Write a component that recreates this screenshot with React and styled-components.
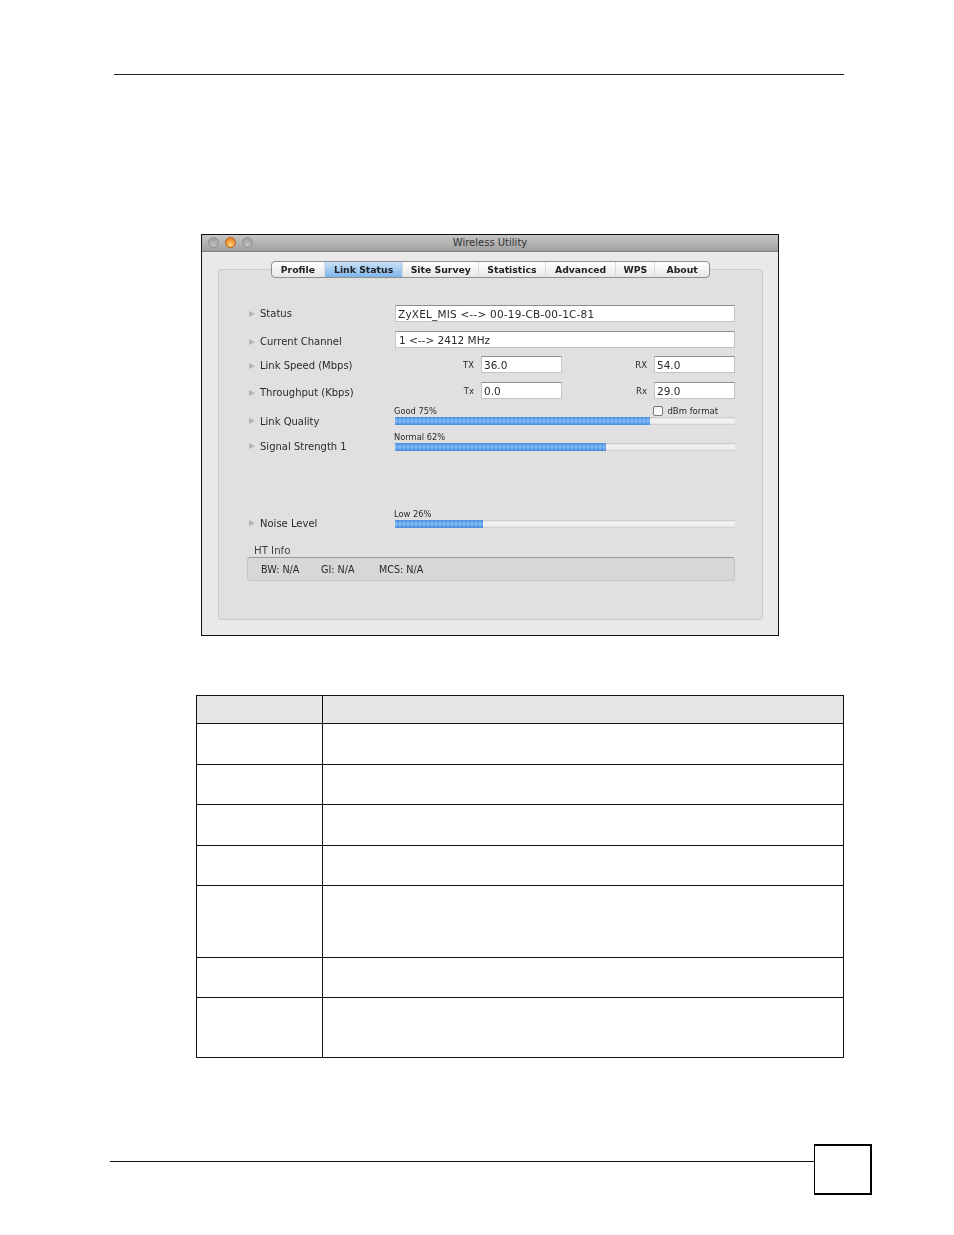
import React from "react";
import styled, { createGlobalStyle } from "styled-components";

const TABS = [
  { label: "Profile", width: 53 },
  { label: "Link Status", width: 79, active: true },
  { label: "Site Survey", width: 76 },
  { label: "Statistics", width: 67 },
  { label: "Advanced", width: 71 },
  { label: "WPS", width: 39 },
  { label: "About", width: 54 },
];

const ROW_HEIGHTS = [41, 40, 41, 40, 72, 40, 60];

const GlobalStyle = createGlobalStyle`
  html, body {
    margin: 0;
    padding: 0;
    background: #fff;
  }
`;

const Page = styled.div`
  width: 954px;
  height: 1235px;
  overflow: hidden;
  padding-top: 74px;
  box-sizing: border-box;
  font-family: "DejaVu Sans", sans-serif;
`;

const HeaderRule = styled.div`
  width: 730px;
  height: 1px;
  margin-left: 114px;
  background: #222;
`;

const AppWindow = styled.div`
  width: 578px;
  height: 402px;
  box-sizing: border-box;
  margin: 159px 0 0 201px;
  border: 1px solid #111;
  background: #e9e9e9;
  color: #2a2a2a;
`;

const Blurred = styled.div`
  filter: blur(0.35px);
`;

const TitleBar = styled.div`
  position: relative;
  height: 16px;
  line-height: 16px;
  display: flex;
  align-items: flex-start;
  justify-content: center;
  background: linear-gradient(#c6c6c6, #a0a0a0);
  border-bottom: 1px solid #808080;
  font-size: 10px;
  color: #333;
`;

const Lights = styled.div`
  position: absolute;
  left: 6px;
  top: 2px;
  display: flex;
  gap: 6px;
`;

const Light = styled.span`
  width: 11px;
  height: 11px;
  border-radius: 50%;
  box-sizing: border-box;
  border: 1px solid ${(p) => (p.$on ? "#b5601a" : "#929292")};
  background: ${(p) =>
    p.$on
      ? "radial-gradient(circle at 50% 75%, #ffd27a, #ee8a2a 70%)"
      : "radial-gradient(circle at 50% 80%, #c4c4c4, #a2a2a2 70%)"};
`;

const Panel = styled.div`
  width: 545px;
  height: 351px;
  box-sizing: border-box;
  margin: 17px 0 0 16px;
  border: 1px solid #cbcbcb;
  border-radius: 3px;
  background: #e0e0e0;
  padding: 0 27px 0 30px;
`;

const TabStrip = styled.div`
  display: flex;
  width: 439px;
  height: 17px;
  box-sizing: border-box;
  margin: -9px 0 0 22px;
  border: 1px solid #8f8f8f;
  border-radius: 4px;
  background: linear-gradient(#ffffff, #f2f2f2 55%, #e6e6e6);
  overflow: hidden;
`;

const Tab = styled.div`
  display: flex;
  align-items: center;
  justify-content: center;
  font-size: 9.3px;
  font-weight: bold;
  color: #222;
  box-sizing: border-box;
  border-right: 1px solid #dcdcdc;
  background: ${(p) =>
    p.$active ? "linear-gradient(#c9e0f6, #7db6ec)" : "transparent"};
  &:last-child {
    border-right: 0;
  }
`;

const Row = styled.div`
  display: grid;
  grid-template-columns: 146px 340px;
  align-items: ${(p) => (p.$meter ? "end" : "center")};
  height: ${(p) => p.$height}px;
  margin-top: ${(p) => p.$gap}px;
`;

const Label = styled.div`
  display: flex;
  align-items: center;
  gap: 5px;
  height: ${(p) => (p.$meter ? "8px" : "auto")};
  margin-top: ${(p) => p.$drop || 0}px;
  margin-bottom: ${(p) => p.$lift || 0}px;
  font-size: 10px;
  color: #2a2a2a;
`;

const Arrow = styled.span`
  width: 0;
  height: 0;
  border-left: 6px solid #b4b4b4;
  border-top: 3.5px solid transparent;
  border-bottom: 3.5px solid transparent;
`;

const Field = styled.div`
  height: 100%;
  box-sizing: border-box;
  padding-left: ${(p) => p.$inset || 2}px;
  display: flex;
  align-items: center;
  background: #fff;
  border: 1px solid #c4c4c4;
  border-top-color: #8e8e8e;
  font-size: 10.5px;
  letter-spacing: ${(p) => p.$spacing || 0}px;
  white-space: pre;
  color: #2a2a2a;
  width: ${(p) => (p.$small ? "81px" : "auto")};
`;

const PairRow = styled.div`
  display: flex;
  align-items: center;
  height: 100%;
`;

const PairLabel = styled.span`
  width: ${(p) => p.$width}px;
  text-align: right;
  padding-right: 7px;
  box-sizing: border-box;
  font-size: 8.5px;
  color: #2a2a2a;
`;

const Meter = styled.div`
  position: relative;
  height: 100%;
  display: flex;
  flex-direction: column;
  justify-content: flex-end;
`;

const Caption = styled.div`
  font-size: 8.3px;
  line-height: 10px;
  color: #2a2a2a;
  margin: 0 0 1px -1px;
`;

const Track = styled.div`
  height: 8px;
  background: linear-gradient(#c0c0c0, #f3f3f3 25%, #ececec 80%, #c4c4c4);
`;

const Fill = styled.div`
  height: 100%;
  background:
    repeating-linear-gradient(90deg, rgba(255, 255, 255, 0.14) 0 2px, transparent 2px 4px),
    linear-gradient(#3f86dc, #74b2f4 50%, #3a80da);
`;

const FormatCheck = styled.label`
  position: absolute;
  right: 17px;
  top: 1px;
  display: flex;
  align-items: center;
  gap: 4px;
  font-size: 8.5px;
  line-height: 10px;
  color: #2a2a2a;
`;

const CheckBox = styled.span`
  width: 10px;
  height: 10px;
  box-sizing: border-box;
  border: 1px solid #777;
  border-radius: 2px;
  background: linear-gradient(#f4f4f4, #ffffff);
`;

const HtTitle = styled.div`
  margin: 16px 0 0 5px;
  font-size: 10.2px;
  line-height: 13px;
  color: #444;
`;

const HtBox = styled.div`
  width: 488px;
  height: 24px;
  box-sizing: border-box;
  margin-left: -2px;
  display: flex;
  align-items: center;
  padding-left: 13px;
  border: 1px solid #c6c6c6;
  border-top-color: #9a9a9a;
  border-radius: 3px;
  background: #d7d7d7;
  font-size: 9.6px;
  color: #2a2a2a;
`;

const HtItem = styled.span`
  width: ${(p) => p.$width}px;
`;

const SpecTable = styled.table`
  width: 648px;
  margin: 59px 0 0 196px;
  border-collapse: collapse;
  table-layout: fixed;
`;

const HeadRow = styled.tr`
  height: 28px;
  background: #e6e6e6;
`;

const BodyRow = styled.tr`
  height: ${(p) => p.$height}px;
`;

const Cell = styled.td`
  padding: 0;
  border: 1px solid #111;
  width: ${(p) => (p.$first ? "125px" : "auto")};
`;

const Footer = styled.div`
  display: flex;
  align-items: flex-start;
  margin: 86px 0 0 110px;
`;

const FooterRule = styled.div`
  width: 704px;
  height: 1px;
  margin-top: 17px;
  background: #111;
`;

const PageBox = styled.div`
  width: 58px;
  height: 51px;
  box-sizing: border-box;
  border: solid #000;
  border-width: 2px 2px 2px 1px;
`;

function Pair({ name, value, labelWidth }) {
  return (
    <>
      <PairLabel $width={labelWidth}>{name}</PairLabel>
      <Field $small>{value}</Field>
    </>
  );
}

function MeterRow({ label, caption, value, height, gap, lift, children }) {
  return (
    <Row $meter $height={height} $gap={gap}>
      <Label $meter $lift={lift}>
        <Arrow />
        {label}
      </Label>
      <Meter>
        {children}
        <Caption>{caption}</Caption>
        <Track>
          <Fill style={{ width: `${value}%` }} />
        </Track>
      </Meter>
    </Row>
  );
}

export default function App() {
  return (
    <Page>
      <GlobalStyle />
      <HeaderRule />
      <AppWindow>
        <Blurred>
          <TitleBar>
            <Lights>
              <Light />
              <Light $on />
              <Light />
            </Lights>
            Wireless Utility
          </TitleBar>
          <Panel>
            <TabStrip>
              {TABS.map((t) => (
                <Tab key={t.label} $active={t.active} style={{ width: t.width }}>
                  {t.label}
                </Tab>
              ))}
            </TabStrip>
            <Row $height={17} $gap={27}>
              <Label>
                <Arrow />
                Status
              </Label>
              <Field $spacing={0.2}>ZyXEL_MIS &lt;--&gt; 00-19-CB-00-1C-81</Field>
            </Row>
            <Row $height={17} $gap={9}>
              <Label $drop={4}>
                <Arrow />
                Current Channel
              </Label>
              <Field $inset={3}>1 &lt;--&gt; 2412 MHz</Field>
            </Row>
            <Row $height={17} $gap={8}>
              <Label $drop={2}>
                <Arrow />
                Link Speed (Mbps)
              </Label>
              <PairRow>
                <Pair name="TX" value="36.0" labelWidth={86} />
                <Pair name="RX" value="54.0" labelWidth={92} />
              </PairRow>
            </Row>
            <Row $height={17} $gap={9}>
              <Label $drop={4}>
                <Arrow />
                Throughput (Kbps)
              </Label>
              <PairRow>
                <Pair name="Tx" value="0.0" labelWidth={86} />
                <Pair name="Rx" value="29.0" labelWidth={92} />
              </PairRow>
            </Row>
            <MeterRow label="Link Quality" caption="Good 75%" value={75} height={20} gap={6}>
              <FormatCheck>
                <CheckBox />
                dBm format
              </FormatCheck>
            </MeterRow>
            <MeterRow label="Signal Strength 1" caption="Normal 62%" value={62} height={20} gap={6} lift={1} />
            <MeterRow label="Noise Level" caption="Low 26%" value={26} height={20} gap={57} lift={1} />
            <HtTitle>HT Info</HtTitle>
            <HtBox>
              <HtItem $width={60}>BW: N/A</HtItem>
              <HtItem $width={58}>GI: N/A</HtItem>
              <HtItem $width={60}>MCS: N/A</HtItem>
            </HtBox>
          </Panel>
        </Blurred>
      </AppWindow>
      <SpecTable>
        <tbody>
          <HeadRow>
            <Cell $first />
            <Cell />
          </HeadRow>
          {ROW_HEIGHTS.map((h, i) => (
            <BodyRow key={i} $height={h}>
              <Cell $first />
              <Cell />
            </BodyRow>
          ))}
        </tbody>
      </SpecTable>
      <Footer>
        <FooterRule />
        <PageBox />
      </Footer>
    </Page>
  );
}
